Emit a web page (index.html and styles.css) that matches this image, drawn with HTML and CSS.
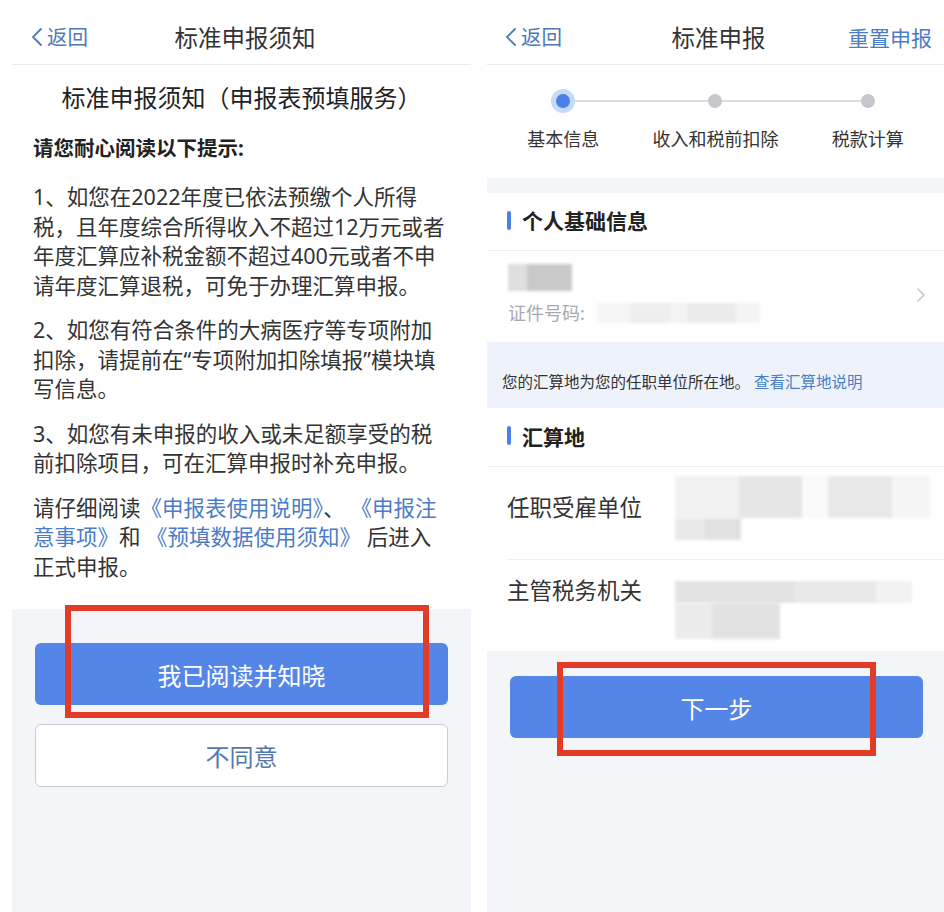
FILE: index.html
```html
<!DOCTYPE html>
<html lang="zh-CN">
<head>
    <meta charset="UTF-8">
    <meta name="viewport" content="width=device-width, initial-scale=1.0">
    <title>标准申报</title>
    <link rel="stylesheet" href="styles.css">
</head>
<body>
<div class="screens">

    <!-- 左侧：申报须知 -->
    <div class="phone phone-notice">
        <div class="nav">
            <div class="nav-back">
                <svg width="12" height="20" viewBox="0 0 12 20"><polyline points="10,2 2,10 10,18" fill="none" stroke="currentColor" stroke-width="1.8" stroke-linejoin="round" stroke-linecap="round"/></svg>
                <span>返回</span>
            </div>
            <div class="nav-title">标准申报须知</div>
            <div></div>
        </div>

        <div class="notice">
            <h1 class="notice-title">标准申报须知（申报表预填服务）</h1>
            <p class="notice-lead">请您耐心阅读以下提示:</p>
            <p>1、如您在2022年度已依法预缴个人所得税，且年度综合所得收入不超过12万元或者年度汇算应补税金额不超过400元或者不申请年度汇算退税，可免于办理汇算申报。</p>
            <p>2、如您有符合条件的大病医疗等专项附加扣除，请提前在“专项附加扣除填报”模块填写信息。</p>
            <p>3、如您有未申报的收入或未足额享受的税前扣除项目，可在汇算申报时补充申报。</p>
            <p>请仔细阅读<a class="link">《申报表使用说明》</a>、 <a class="link">《申报注意事项》</a>和 <a class="link">《预填数据使用须知》</a> 后进入正式申报。</p>
        </div>

        <div class="footer footer-notice">
            <button class="btn btn-primary">我已阅读并知晓</button>
            <button class="btn btn-plain">不同意</button>
            <div class="mark mark-notice"></div>
        </div>
    </div>

    <!-- 右侧：标准申报 -->
    <div class="phone phone-report">
        <div class="nav">
            <div class="nav-back">
                <svg width="12" height="20" viewBox="0 0 12 20"><polyline points="10,2 2,10 10,18" fill="none" stroke="currentColor" stroke-width="1.8" stroke-linejoin="round" stroke-linecap="round"/></svg>
                <span>返回</span>
            </div>
            <div class="nav-title">标准申报</div>
            <div class="nav-action">重置申报</div>
        </div>

        <div class="steps">
            <div class="step active"><span class="dot"></span><span class="step-label">基本信息</span></div>
            <div class="step"><span class="dot"></span><span class="step-label">收入和税前扣除</span></div>
            <div class="step"><span class="dot"></span><span class="step-label">税款计算</span></div>
        </div>

        <div class="spacer"></div>

        <div class="section-title">个人基础信息</div>
        <div class="person">
            <div>
                <div class="mosaic mosaic-name"></div>
                <div class="id-line">
                    <span>证件号码:</span>
                    <span class="mosaic mosaic-id"></span>
                </div>
            </div>
            <svg class="arrow" width="10" height="16" viewBox="0 0 10 16"><polyline points="2,2 8,8 2,14" fill="none" stroke="#c8c8cc" stroke-width="1.6" stroke-linecap="round" stroke-linejoin="round"/></svg>
        </div>

        <div class="tip">您的汇算地为您的任职单位所在地。 <a class="link">查看汇算地说明</a></div>

        <div class="section-title">汇算地</div>
        <div class="field">
            <span class="field-label">任职受雇单位</span>
            <div class="field-value">
                <div class="mosaic mosaic-line1"></div>
                <div class="mosaic mosaic-line2"></div>
            </div>
        </div>
        <div class="field field-top">
            <span class="field-label">主管税务机关</span>
            <div class="field-value">
                <div class="mosaic mosaic-line3"></div>
                <div class="mosaic mosaic-line4"></div>
            </div>
        </div>

        <div class="footer footer-report">
            <button class="btn btn-primary">下一步</button>
            <div class="mark mark-report"></div>
        </div>
    </div>

</div>
</body>
</html>
```

FILE: styles.css
```css
* {
    box-sizing: border-box;
}
body {
    margin: 0;
    background: #fff;
    font-family: "Noto Sans", "Noto Sans CJK SC", sans-serif;
    color: #333;
}
.screens {
    display: flex;
    gap: 16px;
    padding-left: 12px;
    height: 912px;
}
.phone {
    display: flex;
    flex-direction: column;
}
.phone-notice {
    width: 459px;
}
.phone-report {
    width: 457px;
}

/* 顶部导航 */
.nav {
    display: grid;
    grid-template-columns: 1fr auto 1fr;
    align-items: center;
    height: 65px;
    padding: 10px 12px 0 19px;
    border-bottom: 1px solid #e8e9ec;
}
.phone-report .nav {
    padding-left: 18px;
}
.nav-back {
    display: flex;
    align-items: center;
    gap: 4px;
    color: #4f79b8;
    font-size: 20.5px;
    line-height: 30px;
}
.nav-title {
    font-size: 23.5px;
    color: #333;
}
.nav-action {
    justify-self: end;
    color: #4a7cc7;
    font-size: 21px;
}

/* 须知正文 */
.notice {
    padding: 18px 21px 28px;
}
.notice-title {
    margin: 0 0 20px;
    font-size: 24px;
    font-weight: normal;
    line-height: 30px;
    text-align: center;
    color: #222;
}
.notice p {
    margin: 0 0 15px;
    font-size: 21.5px;
    line-height: 29.5px;
}
.notice p:last-child {
    margin-bottom: 0;
}
.notice .notice-lead {
    margin-bottom: 19px;
    font-size: 20.5px;
    line-height: 30px;
    font-weight: bold;
    color: #222;
}
.link {
    color: #4a7cc7;
}

/* 底部按钮区 */
.footer {
    flex: 1;
    position: relative;
    background: #f4f5f8;
}
.footer-notice {
    padding: 34px 23px 0;
}
.footer-report {
    padding: 25px 21px 0 23px;
}
.btn {
    display: block;
    width: 100%;
    height: 62px;
    border-radius: 6px;
    font-family: inherit;
    font-size: 24px;
}
.btn-primary {
    background: #5486e8;
    border: none;
    color: #fff;
}
.btn-plain {
    margin-top: 19px;
    height: 63px;
    background: #fff;
    border: 1px solid #c9cdd4;
    color: #5478ab;
}
.mark {
    position: absolute;
    border: 6px solid #e23b26;
}
.mark-notice {
    left: 53px;
    top: -4px;
    width: 364px;
    height: 113px;
}
.mark-report {
    left: 70px;
    top: 11px;
    width: 319px;
    height: 94px;
}

/* 步骤条 */
.steps {
    display: grid;
    grid-template-columns: repeat(3, 1fr);
    height: 113px;
    padding-top: 29px;
}
.step {
    position: relative;
    display: flex;
    flex-direction: column;
    align-items: center;
}
.step:not(:last-child)::after {
    content: "";
    position: absolute;
    top: 6px;
    left: 50%;
    width: 100%;
    height: 2px;
    background: #dcdde1;
}
.dot {
    position: relative;
    z-index: 1;
    width: 14px;
    height: 14px;
    border-radius: 50%;
    background: #c6c7cc;
}
.step.active .dot {
    background: #4b7fe9;
    box-shadow: 0 0 0 5px #c6daf8;
}
.step-label {
    margin-top: 19px;
    font-size: 18px;
    line-height: 24px;
    color: #333;
}
.spacer {
    height: 15px;
    background: #f4f5f8;
}

/* 信息区块 */
.section-title {
    display: flex;
    align-items: center;
    height: 58px;
    padding: 0 0 3px 20px;
    border-bottom: 1px solid #efeff2;
    font-size: 21px;
    font-weight: bold;
    color: #222;
}
.section-title::before {
    content: "";
    width: 4px;
    height: 19px;
    margin-right: 11px;
    border-radius: 2px;
    background: #4b7fe9;
}
.tip + .section-title {
    height: 59px;
}
.person {
    display: flex;
    align-items: center;
    justify-content: space-between;
    padding: 13px 18px 17px 21px;
}
.id-line {
    display: flex;
    align-items: center;
    margin-top: 10px;
    font-size: 18px;
    line-height: 24px;
    color: #a8a8ad;
}
.mosaic {
    filter: blur(1.5px);
}
.mosaic-name {
    width: 64px;
    height: 27px;
    background: linear-gradient(90deg, #dedede 0 30%, #c9c9c9 30% 100%);
}
.mosaic-id {
    width: 163px;
    height: 20px;
    margin-left: 12px;
    background: linear-gradient(90deg, #f6f6f6 0 20%, #eeeeee 20% 45%, #f3f3f3 45% 55%, #ececec 55% 85%, #f4f4f4 85%);
}
.tip {
    padding: 30px 15px 16px;
    background: #eef3fb;
    font-size: 15.5px;
    line-height: 20px;
    color: #333;
}
.field {
    display: flex;
    align-items: center;
    margin-left: 20px;
    padding: 9px 14px 19px 0;
    border-bottom: 1px solid #efeff2;
}
.field-top {
    align-items: flex-start;
    padding-top: 17px;
    padding-bottom: 12px;
    border-bottom: none;
}
.field-label {
    width: 168px;
    flex-shrink: 0;
    font-size: 22.5px;
    line-height: 30px;
    color: #333;
}
.field-top .field-label {
    margin-top: -1px;
}
.mosaic-line1 {
    width: 255px;
    height: 42px;
    background: linear-gradient(90deg, #f2f2f2 0 25%, #e6e6e6 25% 50%, #fafafa 50% 60%, #e8e8e8 60% 85%, #f5f5f5 85%);
}
.mosaic-line2 {
    width: 66px;
    height: 22px;
    background: linear-gradient(90deg, #e9e9e9 0 45%, #e1e1e1 45%);
}
.mosaic-line3 {
    width: 237px;
    height: 22px;
    margin-top: 4px;
    background: linear-gradient(90deg, #e3e3e3 0 50%, #e9e9e9 50% 85%, #f2f2f2 85%);
}
.mosaic-line4 {
    width: 105px;
    height: 36px;
    background: linear-gradient(90deg, #ececec 0 35%, #e2e2e2 35%);
}
```
